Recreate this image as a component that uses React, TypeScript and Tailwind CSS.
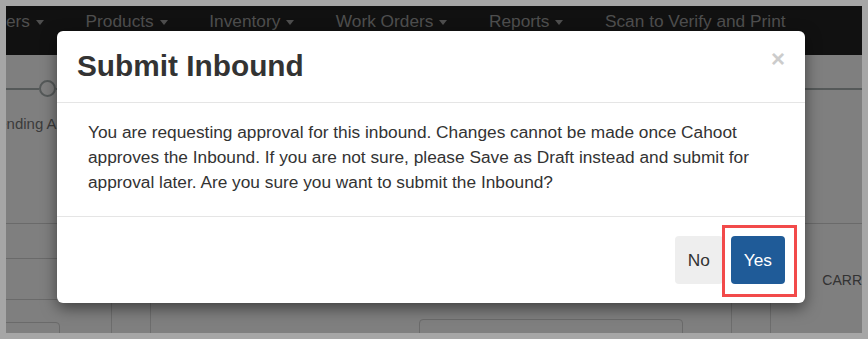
const navItems = ["ers", "Products", "Inventory", "Work Orders", "Reports"];

function Caret() {
  return (
    <span className="ml-[6px] inline-block h-0 w-0 border-x-[4.5px] border-t-[5px] border-x-transparent border-t-[#9d9d9d] align-middle" />
  );
}

export default function App() {
  return (
    <div className="h-[339px] w-[868px] bg-[#a6a6a6] p-[6px] font-['Liberation_Sans',Arial,sans-serif]">
      <div className="relative h-[327px] w-[856px] overflow-hidden bg-white">
        {/* page behind the modal */}
        <nav className="flex h-[49px] gap-[41.5px] whitespace-nowrap bg-[#222] pt-[3px] text-[17.3px] leading-[25px] text-[#9d9d9d]">
          {navItems.map((item) => (
            <span key={item}>
              {item}
              <Caret />
            </span>
          ))}
          <span>Scan to Verify and Print</span>
        </nav>

        {/* progress steps */}
        <div className="pt-[25px]">
          <div className="flex items-center">
            <div className="h-[2px] w-[33px] bg-[#aab3b3]" />
            <div className="h-[17px] w-[17px] rounded-full border-2 border-[#aab3b3] bg-white" />
            <div className="h-[2px] flex-1 bg-[#aab3b3]" />
          </div>
          <div className="-ml-[39px] mt-[17px] w-[160px] whitespace-nowrap text-center text-[15px] leading-[20px] text-[#777]">
            Pending Approval
          </div>
        </div>

        {/* lower page area */}
        <div className="mt-[12px] flex h-[187px]">
          <div className="w-[105px]">
            <div className="h-[78px] border-b border-[#d4d4d4]" />
            <div className="h-[35px] border-b border-[#d4d4d4]" />
            <div className="h-[41px] border-b border-[#d4d4d4]" />
            <div className="-ml-[10px] mt-[22px] h-[34px] w-[64px] rounded-[4px] border border-[#d4d4d4]" />
          </div>
          <div className="w-[40px] border-x border-[#dadada]" />
          <div className="w-[581px]">
            <div className="ml-[268px] mt-[173px] h-[40px] w-[264px] rounded-[4px] border border-[#d4d4d4]" />
          </div>
          <div className="w-[40px] border-x border-[#dadada]" />
          <div className="flex-1">
            <div className="h-[78px] border-b border-[#d4d4d4]" />
            <div className="mt-[46px] pl-[51px] text-[14px] leading-[20px] text-[#666]">CARR</div>
          </div>
        </div>

        {/* backdrop */}
        <div className="absolute inset-0 bg-black/50" />

        {/* modal */}
        <div className="absolute left-[51px] top-[25px] w-[748px] rounded-[6px] bg-white shadow-[0_5px_15px_rgba(0,0,0,0.5)]">
          <div className="flex h-[72px] items-center justify-between border-b border-[#e5e5e5] px-[20px]">
            <h4 className="text-[29.8px] font-bold leading-[1.1] text-[#333]">Submit Inbound</h4>
            <button className="mt-[16px] self-start text-[24px] font-bold leading-none text-[#ccc]">×</button>
          </div>
          <div className="px-[31px] pb-[21px] pt-[17px] text-[17.3px] leading-[25px] text-[#333]">
            You are requesting approval for this inbound. Changes cannot be made once Cahoot approves the Inbound. If
            you are not sure, please Save as Draft instead and submit for approval later. Are you sure you want to
            submit the Inbound?
          </div>
          <div className="flex justify-end gap-[8px] border-t border-[#e5e5e5] px-[20px] pb-[19px] pt-[19px]">
            <button className="rounded-[4px] bg-[#eeeeee] px-[13px] py-[11.5px] text-[17.3px] leading-[25px] text-[#333]">
              No
            </button>
            <button className="rounded-[4px] bg-[#1f5b98] px-[13px] py-[11.5px] text-[17.3px] leading-[25px] text-white">
              Yes
            </button>
          </div>
        </div>

        {/* highlight annotation */}
        <div className="absolute left-[716px] top-[219px] h-[72px] w-[75px] border-[3px] border-[#f24a4a]" />
      </div>
    </div>
  );
}
